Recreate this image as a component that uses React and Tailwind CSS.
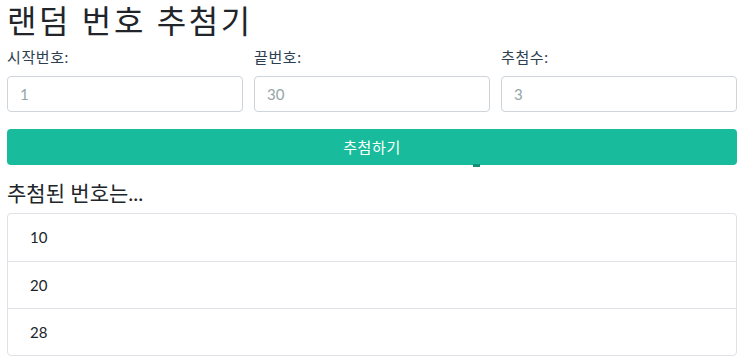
import React from 'react';

const font = { fontFamily: "Lato, 'Noto Sans CJK KR', sans-serif" };

function Field({ label, value }) {
  return (
    <div className="flex flex-col">
      <label className="text-[15px] leading-[20px] tracking-[0.6px] text-[#2c3e50] mb-[9px]">{label}</label>
      <input
        type="text"
        placeholder={value}
        className="h-[36px] w-full rounded-[4px] border border-[#ced4da] bg-white px-[12px] text-[15px] text-[#2c3e50] placeholder:text-[#95a5a6] focus:outline-none"
      />
    </div>
  );
}

export default function App() {
  const picked = [10, 20, 28];

  return (
    <div className="bg-white text-[#2c3e50] min-h-screen" style={font}>
      <div className="w-[730px] ml-[7px]">
        <h1 className="text-[32px] leading-[40px] tracking-[2.6px] font-normal text-[#212529] pt-[1px]">랜덤 번호 추첨기</h1>

        <div className="grid grid-cols-3 gap-[11px] mt-[6px]">
          <Field label="시작번호:" value="1" />
          <Field label="끝번호:" value="30" />
          <Field label="추첨수:" value="3" />
        </div>

        <div className="relative mt-[17px]">
          <button className="w-full h-[36px] rounded-[4px] bg-[#18bc9c] text-white text-[15px] tracking-[0.6px]">
            추첨하기
          </button>
          <span className="absolute left-[466px] top-[35px] w-[7px] h-[3px] bg-[#148f78]" />
        </div>

        <h4 className="text-[21px] leading-[28px] font-normal text-[#212529] mt-[14px] mb-[6px]">추첨된 번호는...</h4>

        <ul className="rounded-[4px] border border-[#dee2e6]">
          {picked.map((n, i) => (
            <li
              key={n}
              className={`h-[47px] flex items-center pl-[22px] text-[15px] text-[#212529] ${i > 0 ? 'border-t border-[#dee2e6]' : ''}`}
            >
              {n}
            </li>
          ))}
        </ul>
      </div>
    </div>
  );
}
